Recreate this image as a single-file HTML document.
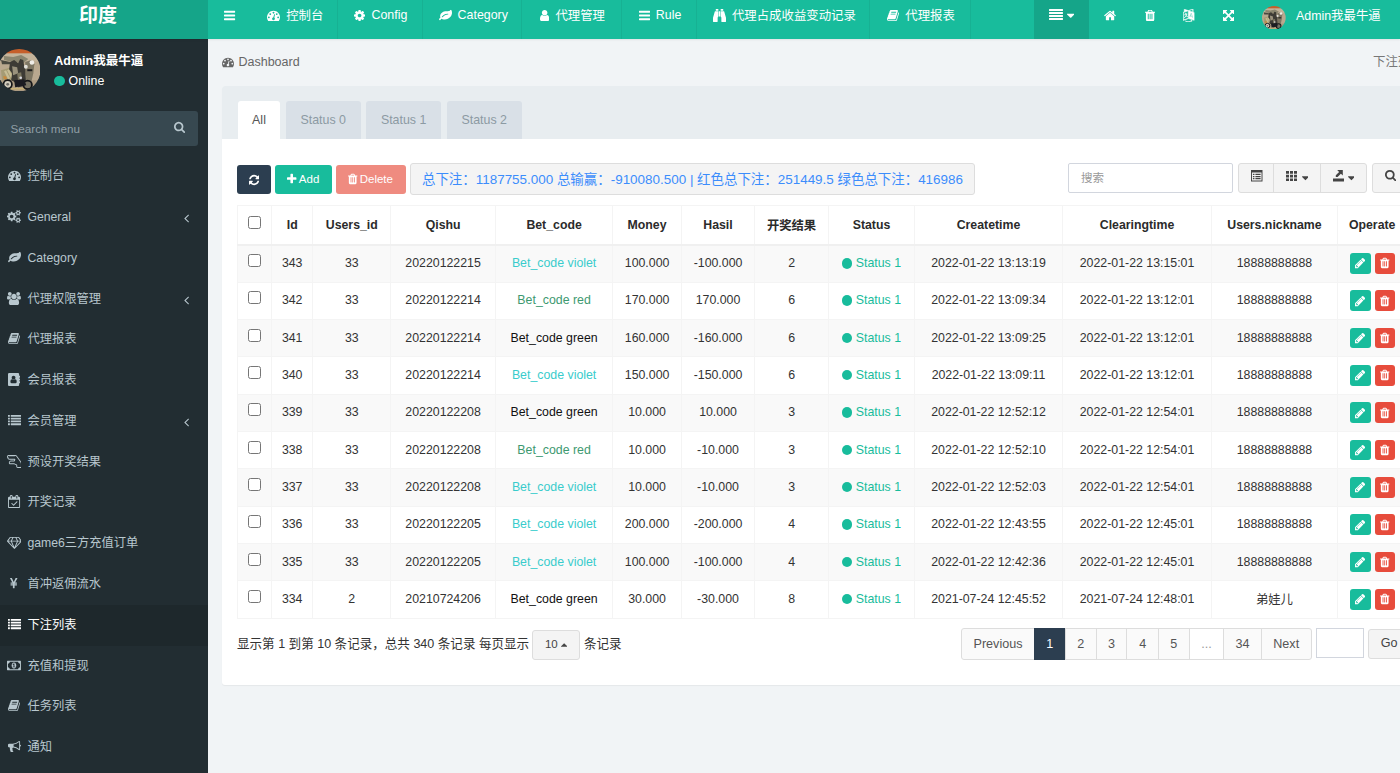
<!DOCTYPE html><html lang="zh"><head><meta charset="utf-8"><title>印度</title><style>*{box-sizing:border-box}
html,body{margin:0;padding:0}
body{width:1400px;height:773px;overflow:hidden;position:relative;background:#f1f4f6;font-family:"Liberation Sans","Noto Sans CJK SC",sans-serif;font-size:12.6px;color:#333}
svg.i{display:inline-block;fill:currentColor;vertical-align:middle;flex:none}
#hdr{position:absolute;left:0;top:0;width:1400px;height:39px;background:#18bc9c;color:#fff;z-index:3;box-shadow:0 1px 2px rgba(0,0,0,.07)}
#logo{position:absolute;left:0;top:0;width:208px;height:39px;background:#15a589;font-size:19px;text-align:center;line-height:31px;padding-right:12px}
.tog{position:absolute;left:208px;top:0;width:44px;height:39px;display:flex;align-items:center;justify-content:center;padding-bottom:9px}
.nv{position:absolute;top:0;height:39px;display:flex;align-items:center;justify-content:center;border-right:1px solid #17b193;font-size:12.4px;padding-bottom:9px;white-space:nowrap}
.nv span{margin-left:6px}
.nv{padding-left:2px}
.nvd{position:absolute;left:1034px;width:55px;top:0;height:39px;background:#15a589;display:flex;align-items:center;justify-content:center;padding-bottom:9px}
.nvi{position:absolute;top:0;width:40px;height:39px;display:flex;align-items:center;justify-content:center;padding-bottom:8px}
.av2{position:absolute;left:1262px;top:5.8px;width:23.7px;height:23.7px}
.unm{position:absolute;left:1296px;top:0;height:33px;line-height:33px;font-size:12.4px;white-space:nowrap}
#sb{position:absolute;left:0;top:39px;width:208px;height:734px;background:#222d32;color:#b8c7ce}
.av1{position:absolute;left:-2px;top:9.7px;width:42.4px;height:42.4px}
.un{position:absolute;left:54.3px;top:10.5px;color:#fff;font-size:12.5px;white-space:nowrap}
.onl{position:absolute;left:54px;top:35px;color:#fff;font-size:12.4px;line-height:14px;white-space:nowrap}
.onl i{display:inline-block;width:10.5px;height:10.5px;border-radius:50%;background:#18bc9c;margin-right:4px;vertical-align:-1px}
.srch{position:absolute;left:-8px;top:72px;width:206px;height:35px;border-radius:3px;background:#374850;color:#8f9ea5;font-size:11.7px;line-height:35.7px;padding-left:18.5px}
.srch svg{position:absolute;left:181.8px;top:10.4px;fill:#b8c7ce}
#sb ul{list-style:none;margin:0;padding:0;position:absolute;left:0;top:117.2px;width:208px}
#sb li{position:relative;height:40.786px;line-height:40.786px;font-size:12.25px;white-space:nowrap}
#sb li.act{background:#1e282c;color:#fff}
.mi{position:absolute;left:4px;width:20px;top:0;text-align:center}
.mi svg{vertical-align:-2px}
.mt{position:absolute;left:27.4px;top:0}
#ct{position:absolute;left:208px;top:39px;width:1192px;height:734px}
.bc{position:absolute;left:14px;top:16px;font-size:12.5px;color:#666;word-spacing:1px;white-space:nowrap}
.bc svg{vertical-align:-2px;fill:#666}
.bcr{position:absolute;left:1165px;top:12.5px;font-size:12.4px;color:#777;white-space:nowrap}
#pn{position:absolute;left:14px;top:47px;width:1200px;height:599px;background:#fff;border-radius:3px;box-shadow:0 1px 1px rgba(0,0,0,.05)}
.ph{position:absolute;left:0;top:0;width:1200px;height:53px;background:#e8edf0;border-radius:3px 3px 0 0}
.tab{position:absolute;top:15.3px;height:37.7px;background:#d9e0e7;color:#8c9aa3;text-align:center;line-height:38.4px;border-radius:3px 3px 0 0;font-size:12.4px}
.tab.on{background:#fff;color:#555}
.btn{position:absolute;border-radius:3px;display:flex;align-items:center;justify-content:center;white-space:nowrap;font-size:11.5px;color:#fff}
.b1{left:15px;top:79px;width:34px;height:29.25px;background:#2c3e50}
.b2{left:53px;top:79px;width:56.75px;height:29.25px;padding-bottom:2px;background:#18bc9c}
.b3{left:113.75px;top:79px;width:69.75px;height:29.25px;padding-bottom:2px;background:#ef8b80}
.b2 span,.b3 span{margin-left:2px}
.b4{left:187.6px;top:77.3px;width:565px;height:31.3px;background:#f4f4f4;border:1px solid #ddd;color:#3c8dfc;font-size:13.45px;justify-content:flex-start;padding-left:11.4px;padding-bottom:1.2px}
.sin{position:absolute;left:846px;top:77px;width:165px;height:30px;border:1px solid #d2d6de;border-radius:2px;color:#999;font-size:11.5px;line-height:28px;padding-left:12px;background:#fff}
.bg{position:absolute;left:1016px;top:77px;height:30px;width:129.2px;border:1px solid #ddd;border-radius:3px;background:#f4f4f4;display:flex;color:#444}
.bg div{display:flex;align-items:center;justify-content:center;height:100%}
.g1{width:35.4px;padding-left:1.4px;border-right:1px solid #ddd}.g2{width:46.8px;padding-left:0;border-right:1px solid #ddd}.g3{flex:1}
.bg svg:first-child{position:relative;top:-2px}
.b5{left:1150.3px;top:77px;width:60px;height:30px;background:#f4f4f4;border:1px solid #ddd;color:#444;justify-content:flex-start;padding-left:11.6px;padding-bottom:5.4px}
#tb{position:absolute;left:14.6px;top:119px;border-collapse:collapse;table-layout:fixed;width:1169.9px;font-size:12.35px}
#tb th,#tb td{border:1px solid #f4f4f4;text-align:center;padding:0;white-space:nowrap;overflow:hidden}
#tb th{height:39.3px;border-bottom:2px solid #f0f0f0;font-weight:bold;color:#2b2b2b;font-size:12.3px}
#tb td{height:37.35px;padding-bottom:1px}
#tb tbody tr:nth-child(odd){background:#f9f9f9}
#tb input{margin:0;width:13px;height:13px;vertical-align:2px}
.c-violet{color:#39cccc}.c-red{color:#3d9970}.c-green{color:#111}
.st{color:#18bc9c}.st i{display:inline-block;width:10.4px;height:10.4px;border-radius:50%;background:#18bc9c;margin-right:3.4px;vertical-align:-1.3px}
td.op{text-align:left !important;padding-left:12px !important;padding-bottom:0.6px !important}
.ob{display:inline-flex;width:20.6px;height:20.6px;border-radius:3px;align-items:center;justify-content:center;color:#fff;vertical-align:middle;margin-right:4px}
.ob.e{background:#18bc9c}.ob.d{background:#e74c3c}
.pinfo{position:absolute;left:15px;top:547px;font-size:12.55px;color:#333;white-space:nowrap}
.pinfo2{position:absolute;left:362px;top:547px;font-size:12.55px;color:#333;white-space:nowrap}
.psz{left:310px;top:544px;width:48px;height:29.5px;padding-bottom:1.5px;background:#f4f4f4;border:1px solid #ddd;color:#444}
.pg{position:absolute;left:739.1px;top:542.2px;height:31px}
.p{position:absolute;top:0;height:32px;border:1px solid #ddd;background:#fafafa;color:#555;text-align:center;line-height:30.4px;font-size:12.6px}
.p:first-child{border-radius:3px 0 0 3px}.p:last-child{border-radius:0 3px 3px 0;width:51px !important}
.p.on{background:#2c3e50;border-color:#2c3e50;color:#fff}
.p.dis{color:#999;background:#fff}
.jin{position:absolute;left:1094px;top:542.4px;width:48px;height:29.6px;border:1px solid #d2d6de;background:#fff}
.go{left:1145.8px;top:543.2px;width:60px;height:30px;background:#f4f4f4;border:1px solid #ddd;color:#444;justify-content:flex-start;padding-left:12px;padding-bottom:1.6px;font-size:12.6px}
</style></head><body><div id="hdr"><div id="logo"><b>印度</b></div><div class="tog"><svg class="i" viewBox="0 -1536 1536 1792" style="width:11.14px;height:13px;"><path transform="scale(1,-1)" d="M1536 192v-128q0 -26 -19 -45t-45 -19h-1408q-26 0 -45 19t-19 45v128q0 26 19 45t45 19h1408q26 0 45 -19t19 -45zM1536 704v-128q0 -26 -19 -45t-45 -19h-1408q-26 0 -45 19t-19 45v128q0 26 19 45t45 19h1408q26 0 45 -19t19 -45zM1536 1216v-128q0 -26 -19 -45 t-45 -19h-1408q-26 0 -45 19t-19 45v128q0 26 19 45t45 19h1408q26 0 45 -19t19 -45z"/></svg></div><div class="nv" style="left:252px;width:85.60000000000002px"><svg class="i" viewBox="0 -1536 1792 1792" style="width:13.00px;height:13px;"><path transform="scale(1,-1)" d="M384 384q0 53 -37.5 90.5t-90.5 37.5t-90.5 -37.5t-37.5 -90.5t37.5 -90.5t90.5 -37.5t90.5 37.5t37.5 90.5zM576 832q0 53 -37.5 90.5t-90.5 37.5t-90.5 -37.5t-37.5 -90.5t37.5 -90.5t90.5 -37.5t90.5 37.5t37.5 90.5zM1004 351l101 382q6 26 -7.5 48.5t-38.5 29.5 t-48 -6.5t-30 -39.5l-101 -382q-60 -5 -107 -43.5t-63 -98.5q-20 -77 20 -146t117 -89t146 20t89 117q16 60 -6 117t-72 91zM1664 384q0 53 -37.5 90.5t-90.5 37.5t-90.5 -37.5t-37.5 -90.5t37.5 -90.5t90.5 -37.5t90.5 37.5t37.5 90.5zM1024 1024q0 53 -37.5 90.5 t-90.5 37.5t-90.5 -37.5t-37.5 -90.5t37.5 -90.5t90.5 -37.5t90.5 37.5t37.5 90.5zM1472 832q0 53 -37.5 90.5t-90.5 37.5t-90.5 -37.5t-37.5 -90.5t37.5 -90.5t90.5 -37.5t90.5 37.5t37.5 90.5zM1792 384q0 -261 -141 -483q-19 -29 -54 -29h-1402q-35 0 -54 29 q-141 221 -141 483q0 182 71 348t191 286t286 191t348 71t348 -71t286 -191t191 -286t71 -348z"/></svg><span>控制台</span></div><div class="nv" style="left:337.6px;width:85.5px"><svg class="i" viewBox="0 -1536 1536 1792" style="width:11.14px;height:13px;"><path transform="scale(1,-1)" d="M1024 640q0 106 -75 181t-181 75t-181 -75t-75 -181t75 -181t181 -75t181 75t75 181zM1536 749v-222q0 -12 -8 -23t-20 -13l-185 -28q-19 -54 -39 -91q35 -50 107 -138q10 -12 10 -25t-9 -23q-27 -37 -99 -108t-94 -71q-12 0 -26 9l-138 108q-44 -23 -91 -38 q-16 -136 -29 -186q-7 -28 -36 -28h-222q-14 0 -24.5 8.5t-11.5 21.5l-28 184q-49 16 -90 37l-141 -107q-10 -9 -25 -9q-14 0 -25 11q-126 114 -165 168q-7 10 -7 23q0 12 8 23q15 21 51 66.5t54 70.5q-27 50 -41 99l-183 27q-13 2 -21 12.5t-8 23.5v222q0 12 8 23t19 13 l186 28q14 46 39 92q-40 57 -107 138q-10 12 -10 24q0 10 9 23q26 36 98.5 107.5t94.5 71.5q13 0 26 -10l138 -107q44 23 91 38q16 136 29 186q7 28 36 28h222q14 0 24.5 -8.5t11.5 -21.5l28 -184q49 -16 90 -37l142 107q9 9 24 9q13 0 25 -10q129 -119 165 -170q7 -8 7 -22 q0 -12 -8 -23q-15 -21 -51 -66.5t-54 -70.5q26 -50 41 -98l183 -28q13 -2 21 -12.5t8 -23.5z"/></svg><span>Config</span></div><div class="nv" style="left:423.1px;width:99.29999999999995px"><svg class="i" viewBox="0 -1536 1792 1792" style="width:13.00px;height:13px;"><path transform="scale(1,-1)" d="M1280 832q0 26 -19 45t-45 19q-172 0 -318 -49.5t-259.5 -134t-235.5 -219.5q-19 -21 -19 -45q0 -26 19 -45t45 -19q24 0 45 19q27 24 74 71t67 66q137 124 268.5 176t313.5 52q26 0 45 19t19 45zM1792 1030q0 -95 -20 -193q-46 -224 -184.5 -383t-357.5 -268 q-214 -108 -438 -108q-148 0 -286 47q-15 5 -88 42t-96 37q-16 0 -39.5 -32t-45 -70t-52.5 -70t-60 -32q-43 0 -63.5 17.5t-45.5 59.5q-2 4 -6 11t-5.5 10t-3 9.5t-1.5 13.5q0 35 31 73.5t68 65.5t68 56t31 48q0 4 -14 38t-16 44q-9 51 -9 104q0 115 43.5 220t119 184.5 t170.5 139t204 95.5q55 18 145 25.5t179.5 9t178.5 6t163.5 24t113.5 56.5l29.5 29.5t29.5 28t27 20t36.5 16t43.5 4.5q39 0 70.5 -46t47.5 -112t24 -124t8 -96z"/></svg><span>Category</span></div><div class="nv" style="left:522.4px;width:99.39999999999998px"><svg class="i" viewBox="0 -1536 1280 1792" style="width:9.29px;height:13px;"><path transform="scale(1,-1)" d="M1280 137q0 -109 -62.5 -187t-150.5 -78h-854q-88 0 -150.5 78t-62.5 187q0 85 8.5 160.5t31.5 152t58.5 131t94 89t134.5 34.5q131 -128 313 -128t313 128q76 0 134.5 -34.5t94 -89t58.5 -131t31.5 -152t8.5 -160.5zM1024 1024q0 -159 -112.5 -271.5t-271.5 -112.5 t-271.5 112.5t-112.5 271.5t112.5 271.5t271.5 112.5t271.5 -112.5t112.5 -271.5z"/></svg><span>代理管理</span></div><div class="nv" style="left:621.8px;width:75.5px"><svg class="i" viewBox="0 -1536 1536 1792" style="width:11.14px;height:13px;"><path transform="scale(1,-1)" d="M1536 192v-128q0 -26 -19 -45t-45 -19h-1408q-26 0 -45 19t-19 45v128q0 26 19 45t45 19h1408q26 0 45 -19t19 -45zM1536 704v-128q0 -26 -19 -45t-45 -19h-1408q-26 0 -45 19t-19 45v128q0 26 19 45t45 19h1408q26 0 45 -19t19 -45zM1536 1216v-128q0 -26 -19 -45 t-45 -19h-1408q-26 0 -45 19t-19 45v128q0 26 19 45t45 19h1408q26 0 45 -19t19 -45z"/></svg><span>Rule</span></div><div class="nv" style="left:697.3px;width:173.20000000000005px"><svg class="i" viewBox="0 -1536 1792 1792" style="width:13.00px;height:13px;"><path transform="scale(1,-1)" d="M704 1216v-768q0 -26 -19 -45t-45 -19v-576q0 -26 -19 -45t-45 -19h-512q-26 0 -45 19t-19 45v512l249 873q7 23 31 23h424zM1024 1216v-704h-256v704h256zM1792 320v-512q0 -26 -19 -45t-45 -19h-512q-26 0 -45 19t-19 45v576q-26 0 -45 19t-19 45v768h424q24 0 31 -23z M736 1504v-224h-352v224q0 14 9 23t23 9h288q14 0 23 -9t9 -23zM1408 1504v-224h-352v224q0 14 9 23t23 9h288q14 0 23 -9t9 -23z"/></svg><span>代理占成收益变动记录</span></div><div class="nv" style="left:870.5px;width:100.0px"><svg class="i" viewBox="0 -1536 1664 1792" style="width:12.07px;height:13px;"><path transform="scale(1,-1)" d="M1639 1058q40 -57 18 -129l-275 -906q-19 -64 -76.5 -107.5t-122.5 -43.5h-923q-77 0 -148.5 53.5t-99.5 131.5q-24 67 -2 127q0 4 3 27t4 37q1 8 -3 21.5t-3 19.5q2 11 8 21t16.5 23.5t16.5 23.5q23 38 45 91.5t30 91.5q3 10 0.5 30t-0.5 28q3 11 17 28t17 23 q21 36 42 92t25 90q1 9 -2.5 32t0.5 28q4 13 22 30.5t22 22.5q19 26 42.5 84.5t27.5 96.5q1 8 -3 25.5t-2 26.5q2 8 9 18t18 23t17 21q8 12 16.5 30.5t15 35t16 36t19.5 32t26.5 23.5t36 11.5t47.5 -5.5l-1 -3q38 9 51 9h761q74 0 114 -56t18 -130l-274 -906 q-36 -119 -71.5 -153.5t-128.5 -34.5h-869q-27 0 -38 -15q-11 -16 -1 -43q24 -70 144 -70h923q29 0 56 15.5t35 41.5l300 987q7 22 5 57q38 -15 59 -43zM575 1056q-4 -13 2 -22.5t20 -9.5h608q13 0 25.5 9.5t16.5 22.5l21 64q4 13 -2 22.5t-20 9.5h-608q-13 0 -25.5 -9.5 t-16.5 -22.5zM492 800q-4 -13 2 -22.5t20 -9.5h608q13 0 25.5 9.5t16.5 22.5l21 64q4 13 -2 22.5t-20 9.5h-608q-13 0 -25.5 -9.5t-16.5 -22.5z"/></svg><span>代理报表</span></div><div class="nvd"><svg class="i" viewBox="0 -1536 1792 1792" style="width:14.00px;height:14px;"><path transform="scale(1,-1)" d="M1792 192v-128q0 -26 -19 -45t-45 -19h-1664q-26 0 -45 19t-19 45v128q0 26 19 45t45 19h1664q26 0 45 -19t19 -45zM1792 576v-128q0 -26 -19 -45t-45 -19h-1664q-26 0 -45 19t-19 45v128q0 26 19 45t45 19h1664q26 0 45 -19t19 -45zM1792 960v-128q0 -26 -19 -45 t-45 -19h-1664q-26 0 -45 19t-19 45v128q0 26 19 45t45 19h1664q26 0 45 -19t19 -45zM1792 1344v-128q0 -26 -19 -45t-45 -19h-1664q-26 0 -45 19t-19 45v128q0 26 19 45t45 19h1664q26 0 45 -19t19 -45z"/></svg><svg class="i" viewBox="0 -1536 1024 1792" style="width:7.43px;height:13px;margin-left:4px"><path transform="scale(1,-1)" d="M1024 832q0 -26 -19 -45l-448 -448q-19 -19 -45 -19t-45 19l-448 448q-19 19 -19 45t19 45t45 19h896q26 0 45 -19t19 -45z"/></svg></div><div class="nvi" style="left:1090px"><svg class="i" viewBox="0 -1536 1664 1792" style="width:12.07px;height:13px;"><path transform="scale(1,-1)" d="M1408 544v-480q0 -26 -19 -45t-45 -19h-384v384h-256v-384h-384q-26 0 -45 19t-19 45v480q0 1 0.5 3t0.5 3l575 474l575 -474q1 -2 1 -6zM1631 613l-62 -74q-8 -9 -21 -11h-3q-13 0 -21 7l-692 577l-692 -577q-12 -8 -24 -7q-13 2 -21 11l-62 74q-8 10 -7 23.5t11 21.5 l719 599q32 26 76 26t76 -26l244 -204v195q0 14 9 23t23 9h192q14 0 23 -9t9 -23v-408l219 -182q10 -8 11 -21.5t-7 -23.5z"/></svg></div><div class="nvi" style="left:1130px"><svg class="i" viewBox="0 -1536 1408 1792" style="width:10.21px;height:13px;"><path transform="scale(1,-1)" d="M512 160v704q0 14 -9 23t-23 9h-64q-14 0 -23 -9t-9 -23v-704q0 -14 9 -23t23 -9h64q14 0 23 9t9 23zM768 160v704q0 14 -9 23t-23 9h-64q-14 0 -23 -9t-9 -23v-704q0 -14 9 -23t23 -9h64q14 0 23 9t9 23zM1024 160v704q0 14 -9 23t-23 9h-64q-14 0 -23 -9t-9 -23v-704 q0 -14 9 -23t23 -9h64q14 0 23 9t9 23zM480 1152h448l-48 117q-7 9 -17 11h-317q-10 -2 -17 -11zM1408 1120v-64q0 -14 -9 -23t-23 -9h-96v-948q0 -83 -47 -143.5t-113 -60.5h-832q-66 0 -113 58.5t-47 141.5v952h-96q-14 0 -23 9t-9 23v64q0 14 9 23t23 9h309l70 167 q15 37 54 63t79 26h320q40 0 79 -26t54 -63l70 -167h309q14 0 23 -9t9 -23z"/></svg></div><div class="nvi" style="left:1169px"><svg class="i" viewBox="0 -1536 1536 1792" style="width:11.14px;height:13px;stroke:#fff;stroke-width:70;"><path transform="scale(1,-1)" d="M654 458q-1 -3 -12.5 0.5t-31.5 11.5l-20 9q-44 20 -87 49q-7 5 -41 31.5t-38 28.5q-67 -103 -134 -181q-81 -95 -105 -110q-4 -2 -19.5 -4t-18.5 0q6 4 82 92q21 24 85.5 115t78.5 118q17 30 51 98.5t36 77.5q-8 1 -110 -33q-8 -2 -27.5 -7.5t-34.5 -9.5t-17 -5 q-2 -2 -2 -10.5t-1 -9.5q-5 -10 -31 -15q-23 -7 -47 0q-18 4 -28 21q-4 6 -5 23q6 2 24.5 5t29.5 6q58 16 105 32q100 35 102 35q10 2 43 19.5t44 21.5q9 3 21.5 8t14.5 5.5t6 -0.5q2 -12 -1 -33q0 -2 -12.5 -27t-26.5 -53.5t-17 -33.5q-25 -50 -77 -131l64 -28 q12 -6 74.5 -32t67.5 -28q4 -1 10.5 -25.5t4.5 -30.5zM449 944q3 -15 -4 -28q-12 -23 -50 -38q-30 -12 -60 -12q-26 3 -49 26q-14 15 -18 41l1 3q3 -3 19.5 -5t26.5 0t58 16q36 12 55 14q17 0 21 -17zM1147 815l63 -227l-139 42zM39 15l694 232v1032l-694 -233v-1031z M1280 332l102 -31l-181 657l-100 31l-216 -536l102 -31l45 110l211 -65zM777 1294l573 -184v380zM1088 -29l158 -13l-54 -160l-40 66q-130 -83 -276 -108q-58 -12 -91 -12h-84q-79 0 -199.5 39t-183.5 85q-8 7 -8 16q0 8 5 13.5t13 5.5q4 0 18 -7.5t30.5 -16.5t20.5 -11 q73 -37 159.5 -61.5t157.5 -24.5q95 0 167 14.5t157 50.5q15 7 30.5 15.5t34 19t28.5 16.5zM1536 1050v-1079l-774 246q-14 -6 -375 -127.5t-368 -121.5q-13 0 -18 13q0 1 -1 3v1078q3 9 4 10q5 6 20 11q107 36 149 50v384l558 -198q2 0 160.5 55t316 108.5t161.5 53.5 q20 0 20 -21v-418z"/></svg></div><div class="nvi" style="left:1208.3px"><svg class="i" viewBox="0 -1536 1536 1792" style="width:11.14px;height:13px;"><path transform="scale(1,-1)" d="M1283 995l-355 -355l355 -355l144 144q29 31 70 14q39 -17 39 -59v-448q0 -26 -19 -45t-45 -19h-448q-42 0 -59 40q-17 39 14 69l144 144l-355 355l-355 -355l144 -144q31 -30 14 -69q-17 -40 -59 -40h-448q-26 0 -45 19t-19 45v448q0 42 40 59q39 17 69 -14l144 -144 l355 355l-355 355l-144 -144q-19 -19 -45 -19q-12 0 -24 5q-40 17 -40 59v448q0 26 19 45t45 19h448q42 0 59 -40q17 -39 -14 -69l-144 -144l355 -355l355 355l-144 144q-31 30 -14 69q17 40 59 40h448q26 0 45 -19t19 -45v-448q0 -42 -39 -59q-13 -5 -25 -5q-26 0 -45 19z "/></svg></div><div class="av2"><svg viewBox="0 0 42 42" style="width:100%;height:100%;display:block"><defs><clipPath id="c2"><circle cx="21" cy="21" r="21"/></clipPath><filter id="fc2" x="-10%" y="-10%" width="120%" height="120%"><feGaussianBlur stdDeviation="0.55"/></filter></defs><g clip-path="url(#c2)"><g filter="url(#fc2)"><rect x="-2" y="-2" width="46" height="46" fill="#b9a88f"/><rect x="-2" y="-2" width="46" height="6.6" fill="#c65f2a"/><rect x="-2" y="4.4" width="46" height="8" fill="#c4b49b"/><rect x="-2" y="31" width="46" height="13" fill="#ad9b82"/><rect x="-2" y="38.5" width="46" height="1.6" fill="#c8b277"/><path d="M6 7l9 1 8-2 7 4-5 4-11-1-8-2z" fill="#8b866f"/><path d="M3 11l9 2 1 2-9 0z" fill="#4a4840"/><path d="M3 21l10-3 4 8-5 6-8-1z" fill="#a59b74"/><path d="M6 22l2-1 4 8-2 1zM9 21l2-1 4 8-2 1z" fill="#c7bd95"/><path d="M12 13l4-2 4 3 2-4 3 1 1 6 3 2-1 6 1 7-4 5-5 1-3-5-4-2 1-7-3-4z" fill="#3d3b35"/><path d="M14 17l5 1 1 6-5 2z" fill="#9a927d"/><path d="M19 24l4-1 1 9-4 1z" fill="#7a745f"/><path d="M27 13l6-2 3 4-1 9-2 9-5 2-1-10z" fill="#7d7663"/><path d="M29 20l5 0 0 2-5 0z" fill="#1f1f1e"/><circle cx="33.6" cy="13.4" r="2.3" fill="#efede8"/><circle cx="27.6" cy="17.6" r="1.9" fill="#e3e1da"/><circle cx="22.5" cy="28.5" r="1.3" fill="#d9d9e2"/><circle cx="9.6" cy="35" r="4.2" fill="#d3cdbd" stroke="#141519" stroke-width="1.7"/><circle cx="9.6" cy="35" r="1.4" fill="#6c6a66"/><circle cx="29.4" cy="35.6" r="4.2" fill="#777264" stroke="#141519" stroke-width="1.8"/><path d="M16 31l10-1 2 6-11 2z" fill="#1a1b20"/><path d="M5 27l3 0 1 3-3 0z" fill="#c98a3c"/></g></g></svg></div><div class="unm">Admin我最牛逼</div></div><div id="sb"><div class="av1"><svg viewBox="0 0 42 42" style="width:100%;height:100%;display:block"><defs><clipPath id="c1"><circle cx="21" cy="21" r="21"/></clipPath><filter id="fc1" x="-10%" y="-10%" width="120%" height="120%"><feGaussianBlur stdDeviation="0.55"/></filter></defs><g clip-path="url(#c1)"><g filter="url(#fc1)"><rect x="-2" y="-2" width="46" height="46" fill="#b9a88f"/><rect x="-2" y="-2" width="46" height="6.6" fill="#c65f2a"/><rect x="-2" y="4.4" width="46" height="8" fill="#c4b49b"/><rect x="-2" y="31" width="46" height="13" fill="#ad9b82"/><rect x="-2" y="38.5" width="46" height="1.6" fill="#c8b277"/><path d="M6 7l9 1 8-2 7 4-5 4-11-1-8-2z" fill="#8b866f"/><path d="M3 11l9 2 1 2-9 0z" fill="#4a4840"/><path d="M3 21l10-3 4 8-5 6-8-1z" fill="#a59b74"/><path d="M6 22l2-1 4 8-2 1zM9 21l2-1 4 8-2 1z" fill="#c7bd95"/><path d="M12 13l4-2 4 3 2-4 3 1 1 6 3 2-1 6 1 7-4 5-5 1-3-5-4-2 1-7-3-4z" fill="#3d3b35"/><path d="M14 17l5 1 1 6-5 2z" fill="#9a927d"/><path d="M19 24l4-1 1 9-4 1z" fill="#7a745f"/><path d="M27 13l6-2 3 4-1 9-2 9-5 2-1-10z" fill="#7d7663"/><path d="M29 20l5 0 0 2-5 0z" fill="#1f1f1e"/><circle cx="33.6" cy="13.4" r="2.3" fill="#efede8"/><circle cx="27.6" cy="17.6" r="1.9" fill="#e3e1da"/><circle cx="22.5" cy="28.5" r="1.3" fill="#d9d9e2"/><circle cx="9.6" cy="35" r="4.2" fill="#d3cdbd" stroke="#141519" stroke-width="1.7"/><circle cx="9.6" cy="35" r="1.4" fill="#6c6a66"/><circle cx="29.4" cy="35.6" r="4.2" fill="#777264" stroke="#141519" stroke-width="1.8"/><path d="M16 31l10-1 2 6-11 2z" fill="#1a1b20"/><path d="M5 27l3 0 1 3-3 0z" fill="#c98a3c"/></g></g></svg></div><div class="un"><b>Admin我最牛逼</b></div><div class="onl"><i></i>Online</div><div class="srch"><span>Search menu</span><svg class="i" viewBox="0 -1536 1664 1792" style="width:11.14px;height:12px;"><path transform="scale(1,-1)" d="M1152 704q0 185 -131.5 316.5t-316.5 131.5t-316.5 -131.5t-131.5 -316.5t131.5 -316.5t316.5 -131.5t316.5 131.5t131.5 316.5zM1664 -128q0 -52 -38 -90t-90 -38q-54 0 -90 38l-343 342q-179 -124 -399 -124q-143 0 -273.5 55.5t-225 150t-150 225t-55.5 273.5 t55.5 273.5t150 225t225 150t273.5 55.5t273.5 -55.5t225 -150t150 -225t55.5 -273.5q0 -220 -124 -399l343 -343q37 -37 37 -90z"/></svg></div><ul><li><span class="mi"><svg class="i" viewBox="0 -1536 1792 1792" style="width:13.00px;height:13px;"><path transform="scale(1,-1)" d="M384 384q0 53 -37.5 90.5t-90.5 37.5t-90.5 -37.5t-37.5 -90.5t37.5 -90.5t90.5 -37.5t90.5 37.5t37.5 90.5zM576 832q0 53 -37.5 90.5t-90.5 37.5t-90.5 -37.5t-37.5 -90.5t37.5 -90.5t90.5 -37.5t90.5 37.5t37.5 90.5zM1004 351l101 382q6 26 -7.5 48.5t-38.5 29.5 t-48 -6.5t-30 -39.5l-101 -382q-60 -5 -107 -43.5t-63 -98.5q-20 -77 20 -146t117 -89t146 20t89 117q16 60 -6 117t-72 91zM1664 384q0 53 -37.5 90.5t-90.5 37.5t-90.5 -37.5t-37.5 -90.5t37.5 -90.5t90.5 -37.5t90.5 37.5t37.5 90.5zM1024 1024q0 53 -37.5 90.5 t-90.5 37.5t-90.5 -37.5t-37.5 -90.5t37.5 -90.5t90.5 -37.5t90.5 37.5t37.5 90.5zM1472 832q0 53 -37.5 90.5t-90.5 37.5t-90.5 -37.5t-37.5 -90.5t37.5 -90.5t90.5 -37.5t90.5 37.5t37.5 90.5zM1792 384q0 -261 -141 -483q-19 -29 -54 -29h-1402q-35 0 -54 29 q-141 221 -141 483q0 182 71 348t191 286t286 191t348 71t348 -71t286 -191t191 -286t71 -348z"/></svg></span><span class="mt">控制台</span></li><li><span class="mi"><svg class="i" viewBox="0 -1536 1920 1792" style="width:13.93px;height:13px;"><path transform="scale(1,-1)" d="M896 640q0 106 -75 181t-181 75t-181 -75t-75 -181t75 -181t181 -75t181 75t75 181zM1664 128q0 52 -38 90t-90 38t-90 -38t-38 -90q0 -53 37.5 -90.5t90.5 -37.5t90.5 37.5t37.5 90.5zM1664 1152q0 52 -38 90t-90 38t-90 -38t-38 -90q0 -53 37.5 -90.5t90.5 -37.5 t90.5 37.5t37.5 90.5zM1280 731v-185q0 -10 -7 -19.5t-16 -10.5l-155 -24q-11 -35 -32 -76q34 -48 90 -115q7 -11 7 -20q0 -12 -7 -19q-23 -30 -82.5 -89.5t-78.5 -59.5q-11 0 -21 7l-115 90q-37 -19 -77 -31q-11 -108 -23 -155q-7 -24 -30 -24h-186q-11 0 -20 7.5t-10 17.5 l-23 153q-34 10 -75 31l-118 -89q-7 -7 -20 -7q-11 0 -21 8q-144 133 -144 160q0 9 7 19q10 14 41 53t47 61q-23 44 -35 82l-152 24q-10 1 -17 9.5t-7 19.5v185q0 10 7 19.5t16 10.5l155 24q11 35 32 76q-34 48 -90 115q-7 11 -7 20q0 12 7 20q22 30 82 89t79 59q11 0 21 -7 l115 -90q34 18 77 32q11 108 23 154q7 24 30 24h186q11 0 20 -7.5t10 -17.5l23 -153q34 -10 75 -31l118 89q8 7 20 7q11 0 21 -8q144 -133 144 -160q0 -8 -7 -19q-12 -16 -42 -54t-45 -60q23 -48 34 -82l152 -23q10 -2 17 -10.5t7 -19.5zM1920 198v-140q0 -16 -149 -31 q-12 -27 -30 -52q51 -113 51 -138q0 -4 -4 -7q-122 -71 -124 -71q-8 0 -46 47t-52 68q-20 -2 -30 -2t-30 2q-14 -21 -52 -68t-46 -47q-2 0 -124 71q-4 3 -4 7q0 25 51 138q-18 25 -30 52q-149 15 -149 31v140q0 16 149 31q13 29 30 52q-51 113 -51 138q0 4 4 7q4 2 35 20 t59 34t30 16q8 0 46 -46.5t52 -67.5q20 2 30 2t30 -2q51 71 92 112l6 2q4 0 124 -70q4 -3 4 -7q0 -25 -51 -138q17 -23 30 -52q149 -15 149 -31zM1920 1222v-140q0 -16 -149 -31q-12 -27 -30 -52q51 -113 51 -138q0 -4 -4 -7q-122 -71 -124 -71q-8 0 -46 47t-52 68 q-20 -2 -30 -2t-30 2q-14 -21 -52 -68t-46 -47q-2 0 -124 71q-4 3 -4 7q0 25 51 138q-18 25 -30 52q-149 15 -149 31v140q0 16 149 31q13 29 30 52q-51 113 -51 138q0 4 4 7q4 2 35 20t59 34t30 16q8 0 46 -46.5t52 -67.5q20 2 30 2t30 -2q51 71 92 112l6 2q4 0 124 -70 q4 -3 4 -7q0 -25 -51 -138q17 -23 30 -52q149 -15 149 -31z"/></svg></span><span class="mt">General</span><svg class="i" viewBox="0 -1536 640 1792" style="width:5.00px;height:14px;position:absolute;left:183.5px;top:14px"><path transform="scale(1,-1)" d="M627 992q0 -13 -10 -23l-393 -393l393 -393q10 -10 10 -23t-10 -23l-50 -50q-10 -10 -23 -10t-23 10l-466 466q-10 10 -10 23t10 23l466 466q10 10 23 10t23 -10l50 -50q10 -10 10 -23z"/></svg></li><li><span class="mi"><svg class="i" viewBox="0 -1536 1792 1792" style="width:13.00px;height:13px;"><path transform="scale(1,-1)" d="M1280 832q0 26 -19 45t-45 19q-172 0 -318 -49.5t-259.5 -134t-235.5 -219.5q-19 -21 -19 -45q0 -26 19 -45t45 -19q24 0 45 19q27 24 74 71t67 66q137 124 268.5 176t313.5 52q26 0 45 19t19 45zM1792 1030q0 -95 -20 -193q-46 -224 -184.5 -383t-357.5 -268 q-214 -108 -438 -108q-148 0 -286 47q-15 5 -88 42t-96 37q-16 0 -39.5 -32t-45 -70t-52.5 -70t-60 -32q-43 0 -63.5 17.5t-45.5 59.5q-2 4 -6 11t-5.5 10t-3 9.5t-1.5 13.5q0 35 31 73.5t68 65.5t68 56t31 48q0 4 -14 38t-16 44q-9 51 -9 104q0 115 43.5 220t119 184.5 t170.5 139t204 95.5q55 18 145 25.5t179.5 9t178.5 6t163.5 24t113.5 56.5l29.5 29.5t29.5 28t27 20t36.5 16t43.5 4.5q39 0 70.5 -46t47.5 -112t24 -124t8 -96z"/></svg></span><span class="mt">Category</span></li><li><span class="mi"><svg class="i" viewBox="0 -1536 1920 1792" style="width:13.93px;height:13px;"><path transform="scale(1,-1)" d="M593 640q-162 -5 -265 -128h-134q-82 0 -138 40.5t-56 118.5q0 353 124 353q6 0 43.5 -21t97.5 -42.5t119 -21.5q67 0 133 23q-5 -37 -5 -66q0 -139 81 -256zM1664 3q0 -120 -73 -189.5t-194 -69.5h-874q-121 0 -194 69.5t-73 189.5q0 53 3.5 103.5t14 109t26.5 108.5 t43 97.5t62 81t85.5 53.5t111.5 20q10 0 43 -21.5t73 -48t107 -48t135 -21.5t135 21.5t107 48t73 48t43 21.5q61 0 111.5 -20t85.5 -53.5t62 -81t43 -97.5t26.5 -108.5t14 -109t3.5 -103.5zM640 1280q0 -106 -75 -181t-181 -75t-181 75t-75 181t75 181t181 75t181 -75 t75 -181zM1344 896q0 -159 -112.5 -271.5t-271.5 -112.5t-271.5 112.5t-112.5 271.5t112.5 271.5t271.5 112.5t271.5 -112.5t112.5 -271.5zM1920 671q0 -78 -56 -118.5t-138 -40.5h-134q-103 123 -265 128q81 117 81 256q0 29 -5 66q66 -23 133 -23q59 0 119 21.5t97.5 42.5 t43.5 21q124 0 124 -353zM1792 1280q0 -106 -75 -181t-181 -75t-181 75t-75 181t75 181t181 75t181 -75t75 -181z"/></svg></span><span class="mt">代理权限管理</span><svg class="i" viewBox="0 -1536 640 1792" style="width:5.00px;height:14px;position:absolute;left:183.5px;top:14px"><path transform="scale(1,-1)" d="M627 992q0 -13 -10 -23l-393 -393l393 -393q10 -10 10 -23t-10 -23l-50 -50q-10 -10 -23 -10t-23 10l-466 466q-10 10 -10 23t10 23l466 466q10 10 23 10t23 -10l50 -50q10 -10 10 -23z"/></svg></li><li><span class="mi"><svg class="i" viewBox="0 -1536 1664 1792" style="width:12.07px;height:13px;"><path transform="scale(1,-1)" d="M1639 1058q40 -57 18 -129l-275 -906q-19 -64 -76.5 -107.5t-122.5 -43.5h-923q-77 0 -148.5 53.5t-99.5 131.5q-24 67 -2 127q0 4 3 27t4 37q1 8 -3 21.5t-3 19.5q2 11 8 21t16.5 23.5t16.5 23.5q23 38 45 91.5t30 91.5q3 10 0.5 30t-0.5 28q3 11 17 28t17 23 q21 36 42 92t25 90q1 9 -2.5 32t0.5 28q4 13 22 30.5t22 22.5q19 26 42.5 84.5t27.5 96.5q1 8 -3 25.5t-2 26.5q2 8 9 18t18 23t17 21q8 12 16.5 30.5t15 35t16 36t19.5 32t26.5 23.5t36 11.5t47.5 -5.5l-1 -3q38 9 51 9h761q74 0 114 -56t18 -130l-274 -906 q-36 -119 -71.5 -153.5t-128.5 -34.5h-869q-27 0 -38 -15q-11 -16 -1 -43q24 -70 144 -70h923q29 0 56 15.5t35 41.5l300 987q7 22 5 57q38 -15 59 -43zM575 1056q-4 -13 2 -22.5t20 -9.5h608q13 0 25.5 9.5t16.5 22.5l21 64q4 13 -2 22.5t-20 9.5h-608q-13 0 -25.5 -9.5 t-16.5 -22.5zM492 800q-4 -13 2 -22.5t20 -9.5h608q13 0 25.5 9.5t16.5 22.5l21 64q4 13 -2 22.5t-20 9.5h-608q-13 0 -25.5 -9.5t-16.5 -22.5z"/></svg></span><span class="mt">代理报表</span></li><li><span class="mi"><svg class="i" viewBox="0 -1536 1664 1792" style="width:12.07px;height:13px;"><path transform="scale(1,-1)" d="M1201 298q0 57 -5.5 107t-21 100.5t-39.5 86t-64 58t-91 22.5q-6 -4 -33.5 -20.5t-42.5 -24.5t-40.5 -20t-49 -17t-46.5 -5t-46.5 5t-49 17t-40.5 20t-42.5 24.5t-33.5 20.5q-51 0 -91 -22.5t-64 -58t-39.5 -86t-21 -100.5t-5.5 -107q0 -73 42 -121.5t103 -48.5h576 q61 0 103 48.5t42 121.5zM1028 892q0 108 -76.5 184t-183.5 76t-183.5 -76t-76.5 -184q0 -107 76.5 -183t183.5 -76t183.5 76t76.5 183zM1664 352v-192q0 -14 -9 -23t-23 -9h-96v-224q0 -66 -47 -113t-113 -47h-1216q-66 0 -113 47t-47 113v1472q0 66 47 113t113 47h1216 q66 0 113 -47t47 -113v-224h96q14 0 23 -9t9 -23v-192q0 -14 -9 -23t-23 -9h-96v-128h96q14 0 23 -9t9 -23v-192q0 -14 -9 -23t-23 -9h-96v-128h96q14 0 23 -9t9 -23z"/></svg></span><span class="mt">会员报表</span></li><li><span class="mi"><svg class="i" viewBox="0 -1536 1792 1792" style="width:13.00px;height:13px;"><path transform="scale(1,-1)" d="M256 224v-192q0 -13 -9.5 -22.5t-22.5 -9.5h-192q-13 0 -22.5 9.5t-9.5 22.5v192q0 13 9.5 22.5t22.5 9.5h192q13 0 22.5 -9.5t9.5 -22.5zM256 608v-192q0 -13 -9.5 -22.5t-22.5 -9.5h-192q-13 0 -22.5 9.5t-9.5 22.5v192q0 13 9.5 22.5t22.5 9.5h192q13 0 22.5 -9.5 t9.5 -22.5zM256 992v-192q0 -13 -9.5 -22.5t-22.5 -9.5h-192q-13 0 -22.5 9.5t-9.5 22.5v192q0 13 9.5 22.5t22.5 9.5h192q13 0 22.5 -9.5t9.5 -22.5zM1792 224v-192q0 -13 -9.5 -22.5t-22.5 -9.5h-1344q-13 0 -22.5 9.5t-9.5 22.5v192q0 13 9.5 22.5t22.5 9.5h1344 q13 0 22.5 -9.5t9.5 -22.5zM256 1376v-192q0 -13 -9.5 -22.5t-22.5 -9.5h-192q-13 0 -22.5 9.5t-9.5 22.5v192q0 13 9.5 22.5t22.5 9.5h192q13 0 22.5 -9.5t9.5 -22.5zM1792 608v-192q0 -13 -9.5 -22.5t-22.5 -9.5h-1344q-13 0 -22.5 9.5t-9.5 22.5v192q0 13 9.5 22.5 t22.5 9.5h1344q13 0 22.5 -9.5t9.5 -22.5zM1792 992v-192q0 -13 -9.5 -22.5t-22.5 -9.5h-1344q-13 0 -22.5 9.5t-9.5 22.5v192q0 13 9.5 22.5t22.5 9.5h1344q13 0 22.5 -9.5t9.5 -22.5zM1792 1376v-192q0 -13 -9.5 -22.5t-22.5 -9.5h-1344q-13 0 -22.5 9.5t-9.5 22.5v192 q0 13 9.5 22.5t22.5 9.5h1344q13 0 22.5 -9.5t9.5 -22.5z"/></svg></span><span class="mt">会员管理</span><svg class="i" viewBox="0 -1536 640 1792" style="width:5.00px;height:14px;position:absolute;left:183.5px;top:14px"><path transform="scale(1,-1)" d="M627 992q0 -13 -10 -23l-393 -393l393 -393q10 -10 10 -23t-10 -23l-50 -50q-10 -10 -23 -10t-23 10l-466 466q-10 10 -10 23t10 23l466 466q10 10 23 10t23 -10l50 -50q10 -10 10 -23z"/></svg></li><li><span class="mi"><svg class="i" viewBox="0 -1536 2048 1792" style="width:14.86px;height:13px;"><path transform="scale(1,-1)" d="M1151 1536q61 0 116 -28t91 -77l572 -781q118 -159 118 -359v-355q0 -80 -56 -136t-136 -56h-384q-80 0 -136 56t-56 136v177l-286 143h-546q-80 0 -136 56t-56 136v32q0 119 84.5 203.5t203.5 84.5h420l42 128h-686q-100 0 -173.5 67.5t-81.5 166.5q-65 79 -65 182v32 q0 80 56 136t136 56h959zM1920 -64v355q0 157 -93 284l-573 781q-39 52 -103 52h-959q-26 0 -45 -19t-19 -45q0 -32 1.5 -49.5t9.5 -40.5t25 -43q10 31 35.5 50t56.5 19h832v-32h-832q-26 0 -45 -19t-19 -45q0 -44 3 -58q8 -44 44 -73t81 -29h640h91q40 0 68 -28t28 -68 q0 -15 -5 -30l-64 -192q-10 -29 -35 -47.5t-56 -18.5h-443q-66 0 -113 -47t-47 -113v-32q0 -26 19 -45t45 -19h561q16 0 29 -7l317 -158q24 -13 38.5 -36t14.5 -50v-197q0 -26 19 -45t45 -19h384q26 0 45 19t19 45z"/></svg></span><span class="mt">预设开奖结果</span></li><li><span class="mi"><svg class="i" viewBox="0 -1536 1792 1792" style="width:13.00px;height:13px;"><path transform="scale(1,-1)" d="M1303 572l-512 -512q-10 -9 -23 -9t-23 9l-288 288q-9 10 -9 23t9 22l46 46q9 9 22 9t23 -9l220 -220l444 444q10 9 23 9t22 -9l46 -46q9 -9 9 -22t-9 -23zM128 -128h1408v1024h-1408v-1024zM512 1088v288q0 14 -9 23t-23 9h-64q-14 0 -23 -9t-9 -23v-288q0 -14 9 -23 t23 -9h64q14 0 23 9t9 23zM1280 1088v288q0 14 -9 23t-23 9h-64q-14 0 -23 -9t-9 -23v-288q0 -14 9 -23t23 -9h64q14 0 23 9t9 23zM1664 1152v-1280q0 -52 -38 -90t-90 -38h-1408q-52 0 -90 38t-38 90v1280q0 52 38 90t90 38h128v96q0 66 47 113t113 47h64q66 0 113 -47 t47 -113v-96h384v96q0 66 47 113t113 47h64q66 0 113 -47t47 -113v-96h128q52 0 90 -38t38 -90z"/></svg></span><span class="mt">开奖记录</span></li><li><span class="mi"><svg class="i" viewBox="0 -1536 2048 1792" style="width:14.86px;height:13px;"><path transform="scale(1,-1)" d="M212 768l623 -665l-300 665h-323zM1024 -4l349 772h-698zM538 896l204 384h-262l-288 -384h346zM1213 103l623 665h-323zM683 896h682l-204 384h-274zM1510 896h346l-288 384h-262zM1651 1382l384 -512q14 -18 13 -41.5t-17 -40.5l-960 -1024q-18 -20 -47 -20t-47 20 l-960 1024q-16 17 -17 40.5t13 41.5l384 512q18 26 51 26h1152q33 0 51 -26z"/></svg></span><span class="mt">game6三方充值订单</span></li><li><span class="mi"><svg class="i" viewBox="0 -1536 1027 1792" style="width:7.45px;height:13px;"><path transform="scale(1,-1)" d="M603 0h-172q-13 0 -22.5 9t-9.5 23v330h-288q-13 0 -22.5 9t-9.5 23v103q0 13 9.5 22.5t22.5 9.5h288v85h-288q-13 0 -22.5 9t-9.5 23v104q0 13 9.5 22.5t22.5 9.5h214l-321 578q-8 16 0 32q10 16 28 16h194q19 0 29 -18l215 -425q19 -38 56 -125q10 24 30.5 68t27.5 61 l191 420q8 19 29 19h191q17 0 27 -16q9 -14 1 -31l-313 -579h215q13 0 22.5 -9.5t9.5 -22.5v-104q0 -14 -9.5 -23t-22.5 -9h-290v-85h290q13 0 22.5 -9.5t9.5 -22.5v-103q0 -14 -9.5 -23t-22.5 -9h-290v-330q0 -13 -9.5 -22.5t-22.5 -9.5z"/></svg></span><span class="mt">首冲返佣流水</span></li><li class="act"><span class="mi"><svg class="i" viewBox="0 -1536 1792 1792" style="width:13.00px;height:13px;"><path transform="scale(1,-1)" d="M256 224v-192q0 -13 -9.5 -22.5t-22.5 -9.5h-192q-13 0 -22.5 9.5t-9.5 22.5v192q0 13 9.5 22.5t22.5 9.5h192q13 0 22.5 -9.5t9.5 -22.5zM256 608v-192q0 -13 -9.5 -22.5t-22.5 -9.5h-192q-13 0 -22.5 9.5t-9.5 22.5v192q0 13 9.5 22.5t22.5 9.5h192q13 0 22.5 -9.5 t9.5 -22.5zM256 992v-192q0 -13 -9.5 -22.5t-22.5 -9.5h-192q-13 0 -22.5 9.5t-9.5 22.5v192q0 13 9.5 22.5t22.5 9.5h192q13 0 22.5 -9.5t9.5 -22.5zM1792 224v-192q0 -13 -9.5 -22.5t-22.5 -9.5h-1344q-13 0 -22.5 9.5t-9.5 22.5v192q0 13 9.5 22.5t22.5 9.5h1344 q13 0 22.5 -9.5t9.5 -22.5zM256 1376v-192q0 -13 -9.5 -22.5t-22.5 -9.5h-192q-13 0 -22.5 9.5t-9.5 22.5v192q0 13 9.5 22.5t22.5 9.5h192q13 0 22.5 -9.5t9.5 -22.5zM1792 608v-192q0 -13 -9.5 -22.5t-22.5 -9.5h-1344q-13 0 -22.5 9.5t-9.5 22.5v192q0 13 9.5 22.5 t22.5 9.5h1344q13 0 22.5 -9.5t9.5 -22.5zM1792 992v-192q0 -13 -9.5 -22.5t-22.5 -9.5h-1344q-13 0 -22.5 9.5t-9.5 22.5v192q0 13 9.5 22.5t22.5 9.5h1344q13 0 22.5 -9.5t9.5 -22.5zM1792 1376v-192q0 -13 -9.5 -22.5t-22.5 -9.5h-1344q-13 0 -22.5 9.5t-9.5 22.5v192 q0 13 9.5 22.5t22.5 9.5h1344q13 0 22.5 -9.5t9.5 -22.5z"/></svg></span><span class="mt">下注列表</span></li><li><span class="mi"><svg class="i" viewBox="0 -1536 1920 1792" style="width:13.93px;height:13px;"><path transform="scale(1,-1)" d="M768 384h384v96h-128v448h-114l-148 -137l77 -80q42 37 55 57h2v-288h-128v-96zM1280 640q0 -70 -21 -142t-59.5 -134t-101.5 -101t-138 -39t-138 39t-101.5 101t-59.5 134t-21 142t21 142t59.5 134t101.5 101t138 39t138 -39t101.5 -101t59.5 -134t21 -142zM1792 384 v512q-106 0 -181 75t-75 181h-1152q0 -106 -75 -181t-181 -75v-512q106 0 181 -75t75 -181h1152q0 106 75 181t181 75zM1920 1216v-1152q0 -26 -19 -45t-45 -19h-1792q-26 0 -45 19t-19 45v1152q0 26 19 45t45 19h1792q26 0 45 -19t19 -45z"/></svg></span><span class="mt">充值和提现</span></li><li><span class="mi"><svg class="i" viewBox="0 -1536 1664 1792" style="width:12.07px;height:13px;"><path transform="scale(1,-1)" d="M1639 1058q40 -57 18 -129l-275 -906q-19 -64 -76.5 -107.5t-122.5 -43.5h-923q-77 0 -148.5 53.5t-99.5 131.5q-24 67 -2 127q0 4 3 27t4 37q1 8 -3 21.5t-3 19.5q2 11 8 21t16.5 23.5t16.5 23.5q23 38 45 91.5t30 91.5q3 10 0.5 30t-0.5 28q3 11 17 28t17 23 q21 36 42 92t25 90q1 9 -2.5 32t0.5 28q4 13 22 30.5t22 22.5q19 26 42.5 84.5t27.5 96.5q1 8 -3 25.5t-2 26.5q2 8 9 18t18 23t17 21q8 12 16.5 30.5t15 35t16 36t19.5 32t26.5 23.5t36 11.5t47.5 -5.5l-1 -3q38 9 51 9h761q74 0 114 -56t18 -130l-274 -906 q-36 -119 -71.5 -153.5t-128.5 -34.5h-869q-27 0 -38 -15q-11 -16 -1 -43q24 -70 144 -70h923q29 0 56 15.5t35 41.5l300 987q7 22 5 57q38 -15 59 -43zM575 1056q-4 -13 2 -22.5t20 -9.5h608q13 0 25.5 9.5t16.5 22.5l21 64q4 13 -2 22.5t-20 9.5h-608q-13 0 -25.5 -9.5 t-16.5 -22.5zM492 800q-4 -13 2 -22.5t20 -9.5h608q13 0 25.5 9.5t16.5 22.5l21 64q4 13 -2 22.5t-20 9.5h-608q-13 0 -25.5 -9.5t-16.5 -22.5z"/></svg></span><span class="mt">任务列表</span></li><li><span class="mi"><svg class="i" viewBox="0 -1536 1792 1792" style="width:13.00px;height:13px;"><path transform="scale(1,-1)" d="M1664 896q53 0 90.5 -37.5t37.5 -90.5t-37.5 -90.5t-90.5 -37.5v-384q0 -52 -38 -90t-90 -38q-417 347 -812 380q-58 -19 -91 -66t-31 -100.5t40 -92.5q-20 -33 -23 -65.5t6 -58t33.5 -55t48 -50t61.5 -50.5q-29 -58 -111.5 -83t-168.5 -11.5t-132 55.5q-7 23 -29.5 87.5 t-32 94.5t-23 89t-15 101t3.5 98.5t22 110.5h-122q-66 0 -113 47t-47 113v192q0 66 47 113t113 47h480q435 0 896 384q52 0 90 -38t38 -90v-384zM1536 292v954q-394 -302 -768 -343v-270q377 -42 768 -341z"/></svg></span><span class="mt">通知</span></li></ul></div><div id="ct"><div class="bc"><svg class="i" viewBox="0 -1536 1792 1792" style="width:12.00px;height:12px;"><path transform="scale(1,-1)" d="M384 384q0 53 -37.5 90.5t-90.5 37.5t-90.5 -37.5t-37.5 -90.5t37.5 -90.5t90.5 -37.5t90.5 37.5t37.5 90.5zM576 832q0 53 -37.5 90.5t-90.5 37.5t-90.5 -37.5t-37.5 -90.5t37.5 -90.5t90.5 -37.5t90.5 37.5t37.5 90.5zM1004 351l101 382q6 26 -7.5 48.5t-38.5 29.5 t-48 -6.5t-30 -39.5l-101 -382q-60 -5 -107 -43.5t-63 -98.5q-20 -77 20 -146t117 -89t146 20t89 117q16 60 -6 117t-72 91zM1664 384q0 53 -37.5 90.5t-90.5 37.5t-90.5 -37.5t-37.5 -90.5t37.5 -90.5t90.5 -37.5t90.5 37.5t37.5 90.5zM1024 1024q0 53 -37.5 90.5 t-90.5 37.5t-90.5 -37.5t-37.5 -90.5t37.5 -90.5t90.5 -37.5t90.5 37.5t37.5 90.5zM1472 832q0 53 -37.5 90.5t-90.5 37.5t-90.5 -37.5t-37.5 -90.5t37.5 -90.5t90.5 -37.5t90.5 37.5t37.5 90.5zM1792 384q0 -261 -141 -483q-19 -29 -54 -29h-1402q-35 0 -54 29 q-141 221 -141 483q0 182 71 348t191 286t286 191t348 71t348 -71t286 -191t191 -286t71 -348z"/></svg> Dashboard</div><div class="bcr">下注列表</div><div id="pn"><div class="ph"><div class="tab on" style="left:16px;width:42px">All</div><div class="tab" style="left:64px;width:74.5px">Status 0</div><div class="tab" style="left:144.25px;width:74.75px">Status 1</div><div class="tab" style="left:225px;width:74.5px">Status 2</div></div><div class="btn b1"><svg class="i" viewBox="0 -1536 1536 1792" style="width:10.29px;height:12px;"><path transform="scale(1,-1)" d="M1511 480q0 -5 -1 -7q-64 -268 -268 -434.5t-478 -166.5q-146 0 -282.5 55t-243.5 157l-129 -129q-19 -19 -45 -19t-45 19t-19 45v448q0 26 19 45t45 19h448q26 0 45 -19t19 -45t-19 -45l-137 -137q71 -66 161 -102t187 -36q134 0 250 65t186 179q11 17 53 117 q8 23 30 23h192q13 0 22.5 -9.5t9.5 -22.5zM1536 1280v-448q0 -26 -19 -45t-45 -19h-448q-26 0 -45 19t-19 45t19 45l138 138q-148 137 -349 137q-134 0 -250 -65t-186 -179q-11 -17 -53 -117q-8 -23 -30 -23h-199q-13 0 -22.5 9.5t-9.5 22.5v7q65 268 270 434.5t480 166.5 q146 0 284 -55.5t245 -156.5l130 129q19 19 45 19t45 -19t19 -45z"/></svg></div><div class="btn b2"><svg class="i" viewBox="0 -1536 1408 1792" style="width:9.43px;height:12px;"><path transform="scale(1,-1)" d="M1408 800v-192q0 -40 -28 -68t-68 -28h-416v-416q0 -40 -28 -68t-68 -28h-192q-40 0 -68 28t-28 68v416h-416q-40 0 -68 28t-28 68v192q0 40 28 68t68 28h416v416q0 40 28 68t68 28h192q40 0 68 -28t28 -68v-416h416q40 0 68 -28t28 -68z"/></svg><span>Add</span></div><div class="btn b3"><svg class="i" viewBox="0 -1536 1408 1792" style="width:9.43px;height:12px;"><path transform="scale(1,-1)" d="M512 160v704q0 14 -9 23t-23 9h-64q-14 0 -23 -9t-9 -23v-704q0 -14 9 -23t23 -9h64q14 0 23 9t9 23zM768 160v704q0 14 -9 23t-23 9h-64q-14 0 -23 -9t-9 -23v-704q0 -14 9 -23t23 -9h64q14 0 23 9t9 23zM1024 160v704q0 14 -9 23t-23 9h-64q-14 0 -23 -9t-9 -23v-704 q0 -14 9 -23t23 -9h64q14 0 23 9t9 23zM480 1152h448l-48 117q-7 9 -17 11h-317q-10 -2 -17 -11zM1408 1120v-64q0 -14 -9 -23t-23 -9h-96v-948q0 -83 -47 -143.5t-113 -60.5h-832q-66 0 -113 58.5t-47 141.5v952h-96q-14 0 -23 9t-9 23v64q0 14 9 23t23 9h309l70 167 q15 37 54 63t79 26h320q40 0 79 -26t54 -63l70 -167h309q14 0 23 -9t9 -23z"/></svg><span>Delete</span></div><div class="btn b4">总下注：1187755.000 总输赢：-910080.500 | 红色总下注：251449.5 绿色总下注：416986</div><div class="sin">搜索</div><div class="bg"><div class="g1"><svg class="i" viewBox="0 0 12 12" style="width:11.5px;height:11.5px"><path fill-rule="evenodd" d="M0 0h12v12H0zM1 2.6v8.4h10V2.6zM2 4h1.6v1.3H2zM4.6 4H10v1.3H4.6zM2 6.2h1.6v1.3H2zM4.6 6.2H10v1.3H4.6zM2 8.4h1.6v1.3H2zM4.6 8.4H10v1.3H4.6z"/></svg></div><div class="g2"><svg class="i" viewBox="0 0 11 10.4" style="width:11px;height:10.4px"><path d="M0 0h3v2.8H0zM4 0h3v2.8H4zM8 0h3v2.8H8zM0 3.8h3v2.8H0zM4 3.8h3v2.8H4zM8 3.8h3v2.8H8zM0 7.6h3v2.8H0zM4 7.6h3v2.8H4zM8 7.6h3v2.8H8z"/></svg><svg class="i" viewBox="0 -1536 1024 1792" style="width:6.86px;height:12px;margin-left:4.5px"><path transform="scale(1,-1)" d="M1024 832q0 -26 -19 -45l-448 -448q-19 -19 -45 -19t-45 19l-448 448q-19 19 -19 45t19 45t45 19h896q26 0 45 -19t19 -45z"/></svg></div><div class="g3"><svg class="i" viewBox="0 0 11 11.5" style="width:11px;height:11.5px"><path d="M0 8.4h11v3.1H0zM4.2 0h5.6v5.6L7.9 3.7 4.6 7 2.8 7 2.8 5.2 6.1 1.9z"/></svg><svg class="i" viewBox="0 -1536 1024 1792" style="width:6.86px;height:12px;margin-left:3.7px"><path transform="scale(1,-1)" d="M1024 832q0 -26 -19 -45l-448 -448q-19 -19 -45 -19t-45 19l-448 448q-19 19 -19 45t19 45t45 19h896q26 0 45 -19t19 -45z"/></svg></div></div><div class="btn b5"><svg class="i" viewBox="0 -1536 1664 1792" style="width:11.42px;height:12.3px;"><path transform="scale(1,-1)" d="M1152 704q0 185 -131.5 316.5t-316.5 131.5t-316.5 -131.5t-131.5 -316.5t131.5 -316.5t316.5 -131.5t316.5 131.5t131.5 316.5zM1664 -128q0 -52 -38 -90t-90 -38q-54 0 -90 38l-343 342q-179 -124 -399 -124q-143 0 -273.5 55.5t-225 150t-150 225t-55.5 273.5 t55.5 273.5t150 225t225 150t273.5 55.5t273.5 -55.5t225 -150t150 -225t55.5 -273.5q0 -220 -124 -399l343 -343q37 -37 37 -90z"/></svg></div><table id="tb"><colgroup><col style="width:34.30px"><col style="width:41.60px"><col style="width:77.60px"><col style="width:105.00px"><col style="width:117.00px"><col style="width:69.00px"><col style="width:72.90px"><col style="width:74.20px"><col style="width:85.70px"><col style="width:148.30px"><col style="width:148.80px"><col style="width:126.00px"><col style="width:69.50px"></colgroup><thead><tr><th><input type="checkbox"></th><th>Id</th><th>Users_id</th><th>Qishu</th><th>Bet_code</th><th>Money</th><th>Hasil</th><th>开奖结果</th><th>Status</th><th>Createtime</th><th>Clearingtime</th><th>Users.nickname</th><th>Operate</th></tr></thead><tbody><tr><td><input type="checkbox"></td><td>343</td><td>33</td><td>20220122215</td><td><span class="c-violet">Bet_code violet</span></td><td>100.000</td><td>-100.000</td><td>2</td><td><span class="st"><i></i>Status 1</span></td><td>2022-01-22 13:13:19</td><td>2022-01-22 13:15:01</td><td>18888888888</td><td class="op"><span class="ob e"><svg class="i" viewBox="0 -1536 1536 1792" style="width:10.29px;height:12px;"><path transform="scale(1,-1)" d="M363 0l91 91l-235 235l-91 -91v-107h128v-128h107zM886 928q0 22 -22 22q-10 0 -17 -7l-542 -542q-7 -7 -7 -17q0 -22 22 -22q10 0 17 7l542 542q7 7 7 17zM832 1120l416 -416l-832 -832h-416v416zM1515 1024q0 -53 -37 -90l-166 -166l-416 416l166 165q36 38 90 38 q53 0 91 -38l235 -234q37 -39 37 -91z"/></svg></span><span class="ob d"><svg class="i" viewBox="0 -1536 1408 1792" style="width:9.43px;height:12px;"><path transform="scale(1,-1)" d="M512 160v704q0 14 -9 23t-23 9h-64q-14 0 -23 -9t-9 -23v-704q0 -14 9 -23t23 -9h64q14 0 23 9t9 23zM768 160v704q0 14 -9 23t-23 9h-64q-14 0 -23 -9t-9 -23v-704q0 -14 9 -23t23 -9h64q14 0 23 9t9 23zM1024 160v704q0 14 -9 23t-23 9h-64q-14 0 -23 -9t-9 -23v-704 q0 -14 9 -23t23 -9h64q14 0 23 9t9 23zM480 1152h448l-48 117q-7 9 -17 11h-317q-10 -2 -17 -11zM1408 1120v-64q0 -14 -9 -23t-23 -9h-96v-948q0 -83 -47 -143.5t-113 -60.5h-832q-66 0 -113 58.5t-47 141.5v952h-96q-14 0 -23 9t-9 23v64q0 14 9 23t23 9h309l70 167 q15 37 54 63t79 26h320q40 0 79 -26t54 -63l70 -167h309q14 0 23 -9t9 -23z"/></svg></span></td></tr><tr><td><input type="checkbox"></td><td>342</td><td>33</td><td>20220122214</td><td><span class="c-red">Bet_code red</span></td><td>170.000</td><td>170.000</td><td>6</td><td><span class="st"><i></i>Status 1</span></td><td>2022-01-22 13:09:34</td><td>2022-01-22 13:12:01</td><td>18888888888</td><td class="op"><span class="ob e"><svg class="i" viewBox="0 -1536 1536 1792" style="width:10.29px;height:12px;"><path transform="scale(1,-1)" d="M363 0l91 91l-235 235l-91 -91v-107h128v-128h107zM886 928q0 22 -22 22q-10 0 -17 -7l-542 -542q-7 -7 -7 -17q0 -22 22 -22q10 0 17 7l542 542q7 7 7 17zM832 1120l416 -416l-832 -832h-416v416zM1515 1024q0 -53 -37 -90l-166 -166l-416 416l166 165q36 38 90 38 q53 0 91 -38l235 -234q37 -39 37 -91z"/></svg></span><span class="ob d"><svg class="i" viewBox="0 -1536 1408 1792" style="width:9.43px;height:12px;"><path transform="scale(1,-1)" d="M512 160v704q0 14 -9 23t-23 9h-64q-14 0 -23 -9t-9 -23v-704q0 -14 9 -23t23 -9h64q14 0 23 9t9 23zM768 160v704q0 14 -9 23t-23 9h-64q-14 0 -23 -9t-9 -23v-704q0 -14 9 -23t23 -9h64q14 0 23 9t9 23zM1024 160v704q0 14 -9 23t-23 9h-64q-14 0 -23 -9t-9 -23v-704 q0 -14 9 -23t23 -9h64q14 0 23 9t9 23zM480 1152h448l-48 117q-7 9 -17 11h-317q-10 -2 -17 -11zM1408 1120v-64q0 -14 -9 -23t-23 -9h-96v-948q0 -83 -47 -143.5t-113 -60.5h-832q-66 0 -113 58.5t-47 141.5v952h-96q-14 0 -23 9t-9 23v64q0 14 9 23t23 9h309l70 167 q15 37 54 63t79 26h320q40 0 79 -26t54 -63l70 -167h309q14 0 23 -9t9 -23z"/></svg></span></td></tr><tr><td><input type="checkbox"></td><td>341</td><td>33</td><td>20220122214</td><td><span class="c-green">Bet_code green</span></td><td>160.000</td><td>-160.000</td><td>6</td><td><span class="st"><i></i>Status 1</span></td><td>2022-01-22 13:09:25</td><td>2022-01-22 13:12:01</td><td>18888888888</td><td class="op"><span class="ob e"><svg class="i" viewBox="0 -1536 1536 1792" style="width:10.29px;height:12px;"><path transform="scale(1,-1)" d="M363 0l91 91l-235 235l-91 -91v-107h128v-128h107zM886 928q0 22 -22 22q-10 0 -17 -7l-542 -542q-7 -7 -7 -17q0 -22 22 -22q10 0 17 7l542 542q7 7 7 17zM832 1120l416 -416l-832 -832h-416v416zM1515 1024q0 -53 -37 -90l-166 -166l-416 416l166 165q36 38 90 38 q53 0 91 -38l235 -234q37 -39 37 -91z"/></svg></span><span class="ob d"><svg class="i" viewBox="0 -1536 1408 1792" style="width:9.43px;height:12px;"><path transform="scale(1,-1)" d="M512 160v704q0 14 -9 23t-23 9h-64q-14 0 -23 -9t-9 -23v-704q0 -14 9 -23t23 -9h64q14 0 23 9t9 23zM768 160v704q0 14 -9 23t-23 9h-64q-14 0 -23 -9t-9 -23v-704q0 -14 9 -23t23 -9h64q14 0 23 9t9 23zM1024 160v704q0 14 -9 23t-23 9h-64q-14 0 -23 -9t-9 -23v-704 q0 -14 9 -23t23 -9h64q14 0 23 9t9 23zM480 1152h448l-48 117q-7 9 -17 11h-317q-10 -2 -17 -11zM1408 1120v-64q0 -14 -9 -23t-23 -9h-96v-948q0 -83 -47 -143.5t-113 -60.5h-832q-66 0 -113 58.5t-47 141.5v952h-96q-14 0 -23 9t-9 23v64q0 14 9 23t23 9h309l70 167 q15 37 54 63t79 26h320q40 0 79 -26t54 -63l70 -167h309q14 0 23 -9t9 -23z"/></svg></span></td></tr><tr><td><input type="checkbox"></td><td>340</td><td>33</td><td>20220122214</td><td><span class="c-violet">Bet_code violet</span></td><td>150.000</td><td>-150.000</td><td>6</td><td><span class="st"><i></i>Status 1</span></td><td>2022-01-22 13:09:11</td><td>2022-01-22 13:12:01</td><td>18888888888</td><td class="op"><span class="ob e"><svg class="i" viewBox="0 -1536 1536 1792" style="width:10.29px;height:12px;"><path transform="scale(1,-1)" d="M363 0l91 91l-235 235l-91 -91v-107h128v-128h107zM886 928q0 22 -22 22q-10 0 -17 -7l-542 -542q-7 -7 -7 -17q0 -22 22 -22q10 0 17 7l542 542q7 7 7 17zM832 1120l416 -416l-832 -832h-416v416zM1515 1024q0 -53 -37 -90l-166 -166l-416 416l166 165q36 38 90 38 q53 0 91 -38l235 -234q37 -39 37 -91z"/></svg></span><span class="ob d"><svg class="i" viewBox="0 -1536 1408 1792" style="width:9.43px;height:12px;"><path transform="scale(1,-1)" d="M512 160v704q0 14 -9 23t-23 9h-64q-14 0 -23 -9t-9 -23v-704q0 -14 9 -23t23 -9h64q14 0 23 9t9 23zM768 160v704q0 14 -9 23t-23 9h-64q-14 0 -23 -9t-9 -23v-704q0 -14 9 -23t23 -9h64q14 0 23 9t9 23zM1024 160v704q0 14 -9 23t-23 9h-64q-14 0 -23 -9t-9 -23v-704 q0 -14 9 -23t23 -9h64q14 0 23 9t9 23zM480 1152h448l-48 117q-7 9 -17 11h-317q-10 -2 -17 -11zM1408 1120v-64q0 -14 -9 -23t-23 -9h-96v-948q0 -83 -47 -143.5t-113 -60.5h-832q-66 0 -113 58.5t-47 141.5v952h-96q-14 0 -23 9t-9 23v64q0 14 9 23t23 9h309l70 167 q15 37 54 63t79 26h320q40 0 79 -26t54 -63l70 -167h309q14 0 23 -9t9 -23z"/></svg></span></td></tr><tr><td><input type="checkbox"></td><td>339</td><td>33</td><td>20220122208</td><td><span class="c-green">Bet_code green</span></td><td>10.000</td><td>10.000</td><td>3</td><td><span class="st"><i></i>Status 1</span></td><td>2022-01-22 12:52:12</td><td>2022-01-22 12:54:01</td><td>18888888888</td><td class="op"><span class="ob e"><svg class="i" viewBox="0 -1536 1536 1792" style="width:10.29px;height:12px;"><path transform="scale(1,-1)" d="M363 0l91 91l-235 235l-91 -91v-107h128v-128h107zM886 928q0 22 -22 22q-10 0 -17 -7l-542 -542q-7 -7 -7 -17q0 -22 22 -22q10 0 17 7l542 542q7 7 7 17zM832 1120l416 -416l-832 -832h-416v416zM1515 1024q0 -53 -37 -90l-166 -166l-416 416l166 165q36 38 90 38 q53 0 91 -38l235 -234q37 -39 37 -91z"/></svg></span><span class="ob d"><svg class="i" viewBox="0 -1536 1408 1792" style="width:9.43px;height:12px;"><path transform="scale(1,-1)" d="M512 160v704q0 14 -9 23t-23 9h-64q-14 0 -23 -9t-9 -23v-704q0 -14 9 -23t23 -9h64q14 0 23 9t9 23zM768 160v704q0 14 -9 23t-23 9h-64q-14 0 -23 -9t-9 -23v-704q0 -14 9 -23t23 -9h64q14 0 23 9t9 23zM1024 160v704q0 14 -9 23t-23 9h-64q-14 0 -23 -9t-9 -23v-704 q0 -14 9 -23t23 -9h64q14 0 23 9t9 23zM480 1152h448l-48 117q-7 9 -17 11h-317q-10 -2 -17 -11zM1408 1120v-64q0 -14 -9 -23t-23 -9h-96v-948q0 -83 -47 -143.5t-113 -60.5h-832q-66 0 -113 58.5t-47 141.5v952h-96q-14 0 -23 9t-9 23v64q0 14 9 23t23 9h309l70 167 q15 37 54 63t79 26h320q40 0 79 -26t54 -63l70 -167h309q14 0 23 -9t9 -23z"/></svg></span></td></tr><tr><td><input type="checkbox"></td><td>338</td><td>33</td><td>20220122208</td><td><span class="c-red">Bet_code red</span></td><td>10.000</td><td>-10.000</td><td>3</td><td><span class="st"><i></i>Status 1</span></td><td>2022-01-22 12:52:10</td><td>2022-01-22 12:54:01</td><td>18888888888</td><td class="op"><span class="ob e"><svg class="i" viewBox="0 -1536 1536 1792" style="width:10.29px;height:12px;"><path transform="scale(1,-1)" d="M363 0l91 91l-235 235l-91 -91v-107h128v-128h107zM886 928q0 22 -22 22q-10 0 -17 -7l-542 -542q-7 -7 -7 -17q0 -22 22 -22q10 0 17 7l542 542q7 7 7 17zM832 1120l416 -416l-832 -832h-416v416zM1515 1024q0 -53 -37 -90l-166 -166l-416 416l166 165q36 38 90 38 q53 0 91 -38l235 -234q37 -39 37 -91z"/></svg></span><span class="ob d"><svg class="i" viewBox="0 -1536 1408 1792" style="width:9.43px;height:12px;"><path transform="scale(1,-1)" d="M512 160v704q0 14 -9 23t-23 9h-64q-14 0 -23 -9t-9 -23v-704q0 -14 9 -23t23 -9h64q14 0 23 9t9 23zM768 160v704q0 14 -9 23t-23 9h-64q-14 0 -23 -9t-9 -23v-704q0 -14 9 -23t23 -9h64q14 0 23 9t9 23zM1024 160v704q0 14 -9 23t-23 9h-64q-14 0 -23 -9t-9 -23v-704 q0 -14 9 -23t23 -9h64q14 0 23 9t9 23zM480 1152h448l-48 117q-7 9 -17 11h-317q-10 -2 -17 -11zM1408 1120v-64q0 -14 -9 -23t-23 -9h-96v-948q0 -83 -47 -143.5t-113 -60.5h-832q-66 0 -113 58.5t-47 141.5v952h-96q-14 0 -23 9t-9 23v64q0 14 9 23t23 9h309l70 167 q15 37 54 63t79 26h320q40 0 79 -26t54 -63l70 -167h309q14 0 23 -9t9 -23z"/></svg></span></td></tr><tr><td><input type="checkbox"></td><td>337</td><td>33</td><td>20220122208</td><td><span class="c-violet">Bet_code violet</span></td><td>10.000</td><td>-10.000</td><td>3</td><td><span class="st"><i></i>Status 1</span></td><td>2022-01-22 12:52:03</td><td>2022-01-22 12:54:01</td><td>18888888888</td><td class="op"><span class="ob e"><svg class="i" viewBox="0 -1536 1536 1792" style="width:10.29px;height:12px;"><path transform="scale(1,-1)" d="M363 0l91 91l-235 235l-91 -91v-107h128v-128h107zM886 928q0 22 -22 22q-10 0 -17 -7l-542 -542q-7 -7 -7 -17q0 -22 22 -22q10 0 17 7l542 542q7 7 7 17zM832 1120l416 -416l-832 -832h-416v416zM1515 1024q0 -53 -37 -90l-166 -166l-416 416l166 165q36 38 90 38 q53 0 91 -38l235 -234q37 -39 37 -91z"/></svg></span><span class="ob d"><svg class="i" viewBox="0 -1536 1408 1792" style="width:9.43px;height:12px;"><path transform="scale(1,-1)" d="M512 160v704q0 14 -9 23t-23 9h-64q-14 0 -23 -9t-9 -23v-704q0 -14 9 -23t23 -9h64q14 0 23 9t9 23zM768 160v704q0 14 -9 23t-23 9h-64q-14 0 -23 -9t-9 -23v-704q0 -14 9 -23t23 -9h64q14 0 23 9t9 23zM1024 160v704q0 14 -9 23t-23 9h-64q-14 0 -23 -9t-9 -23v-704 q0 -14 9 -23t23 -9h64q14 0 23 9t9 23zM480 1152h448l-48 117q-7 9 -17 11h-317q-10 -2 -17 -11zM1408 1120v-64q0 -14 -9 -23t-23 -9h-96v-948q0 -83 -47 -143.5t-113 -60.5h-832q-66 0 -113 58.5t-47 141.5v952h-96q-14 0 -23 9t-9 23v64q0 14 9 23t23 9h309l70 167 q15 37 54 63t79 26h320q40 0 79 -26t54 -63l70 -167h309q14 0 23 -9t9 -23z"/></svg></span></td></tr><tr><td><input type="checkbox"></td><td>336</td><td>33</td><td>20220122205</td><td><span class="c-violet">Bet_code violet</span></td><td>200.000</td><td>-200.000</td><td>4</td><td><span class="st"><i></i>Status 1</span></td><td>2022-01-22 12:43:55</td><td>2022-01-22 12:45:01</td><td>18888888888</td><td class="op"><span class="ob e"><svg class="i" viewBox="0 -1536 1536 1792" style="width:10.29px;height:12px;"><path transform="scale(1,-1)" d="M363 0l91 91l-235 235l-91 -91v-107h128v-128h107zM886 928q0 22 -22 22q-10 0 -17 -7l-542 -542q-7 -7 -7 -17q0 -22 22 -22q10 0 17 7l542 542q7 7 7 17zM832 1120l416 -416l-832 -832h-416v416zM1515 1024q0 -53 -37 -90l-166 -166l-416 416l166 165q36 38 90 38 q53 0 91 -38l235 -234q37 -39 37 -91z"/></svg></span><span class="ob d"><svg class="i" viewBox="0 -1536 1408 1792" style="width:9.43px;height:12px;"><path transform="scale(1,-1)" d="M512 160v704q0 14 -9 23t-23 9h-64q-14 0 -23 -9t-9 -23v-704q0 -14 9 -23t23 -9h64q14 0 23 9t9 23zM768 160v704q0 14 -9 23t-23 9h-64q-14 0 -23 -9t-9 -23v-704q0 -14 9 -23t23 -9h64q14 0 23 9t9 23zM1024 160v704q0 14 -9 23t-23 9h-64q-14 0 -23 -9t-9 -23v-704 q0 -14 9 -23t23 -9h64q14 0 23 9t9 23zM480 1152h448l-48 117q-7 9 -17 11h-317q-10 -2 -17 -11zM1408 1120v-64q0 -14 -9 -23t-23 -9h-96v-948q0 -83 -47 -143.5t-113 -60.5h-832q-66 0 -113 58.5t-47 141.5v952h-96q-14 0 -23 9t-9 23v64q0 14 9 23t23 9h309l70 167 q15 37 54 63t79 26h320q40 0 79 -26t54 -63l70 -167h309q14 0 23 -9t9 -23z"/></svg></span></td></tr><tr><td><input type="checkbox"></td><td>335</td><td>33</td><td>20220122205</td><td><span class="c-violet">Bet_code violet</span></td><td>100.000</td><td>-100.000</td><td>4</td><td><span class="st"><i></i>Status 1</span></td><td>2022-01-22 12:42:36</td><td>2022-01-22 12:45:01</td><td>18888888888</td><td class="op"><span class="ob e"><svg class="i" viewBox="0 -1536 1536 1792" style="width:10.29px;height:12px;"><path transform="scale(1,-1)" d="M363 0l91 91l-235 235l-91 -91v-107h128v-128h107zM886 928q0 22 -22 22q-10 0 -17 -7l-542 -542q-7 -7 -7 -17q0 -22 22 -22q10 0 17 7l542 542q7 7 7 17zM832 1120l416 -416l-832 -832h-416v416zM1515 1024q0 -53 -37 -90l-166 -166l-416 416l166 165q36 38 90 38 q53 0 91 -38l235 -234q37 -39 37 -91z"/></svg></span><span class="ob d"><svg class="i" viewBox="0 -1536 1408 1792" style="width:9.43px;height:12px;"><path transform="scale(1,-1)" d="M512 160v704q0 14 -9 23t-23 9h-64q-14 0 -23 -9t-9 -23v-704q0 -14 9 -23t23 -9h64q14 0 23 9t9 23zM768 160v704q0 14 -9 23t-23 9h-64q-14 0 -23 -9t-9 -23v-704q0 -14 9 -23t23 -9h64q14 0 23 9t9 23zM1024 160v704q0 14 -9 23t-23 9h-64q-14 0 -23 -9t-9 -23v-704 q0 -14 9 -23t23 -9h64q14 0 23 9t9 23zM480 1152h448l-48 117q-7 9 -17 11h-317q-10 -2 -17 -11zM1408 1120v-64q0 -14 -9 -23t-23 -9h-96v-948q0 -83 -47 -143.5t-113 -60.5h-832q-66 0 -113 58.5t-47 141.5v952h-96q-14 0 -23 9t-9 23v64q0 14 9 23t23 9h309l70 167 q15 37 54 63t79 26h320q40 0 79 -26t54 -63l70 -167h309q14 0 23 -9t9 -23z"/></svg></span></td></tr><tr><td><input type="checkbox"></td><td>334</td><td>2</td><td>20210724206</td><td><span class="c-green">Bet_code green</span></td><td>30.000</td><td>-30.000</td><td>8</td><td><span class="st"><i></i>Status 1</span></td><td>2021-07-24 12:45:52</td><td>2021-07-24 12:48:01</td><td>弟娃儿</td><td class="op"><span class="ob e"><svg class="i" viewBox="0 -1536 1536 1792" style="width:10.29px;height:12px;"><path transform="scale(1,-1)" d="M363 0l91 91l-235 235l-91 -91v-107h128v-128h107zM886 928q0 22 -22 22q-10 0 -17 -7l-542 -542q-7 -7 -7 -17q0 -22 22 -22q10 0 17 7l542 542q7 7 7 17zM832 1120l416 -416l-832 -832h-416v416zM1515 1024q0 -53 -37 -90l-166 -166l-416 416l166 165q36 38 90 38 q53 0 91 -38l235 -234q37 -39 37 -91z"/></svg></span><span class="ob d"><svg class="i" viewBox="0 -1536 1408 1792" style="width:9.43px;height:12px;"><path transform="scale(1,-1)" d="M512 160v704q0 14 -9 23t-23 9h-64q-14 0 -23 -9t-9 -23v-704q0 -14 9 -23t23 -9h64q14 0 23 9t9 23zM768 160v704q0 14 -9 23t-23 9h-64q-14 0 -23 -9t-9 -23v-704q0 -14 9 -23t23 -9h64q14 0 23 9t9 23zM1024 160v704q0 14 -9 23t-23 9h-64q-14 0 -23 -9t-9 -23v-704 q0 -14 9 -23t23 -9h64q14 0 23 9t9 23zM480 1152h448l-48 117q-7 9 -17 11h-317q-10 -2 -17 -11zM1408 1120v-64q0 -14 -9 -23t-23 -9h-96v-948q0 -83 -47 -143.5t-113 -60.5h-832q-66 0 -113 58.5t-47 141.5v952h-96q-14 0 -23 9t-9 23v64q0 14 9 23t23 9h309l70 167 q15 37 54 63t79 26h320q40 0 79 -26t54 -63l70 -167h309q14 0 23 -9t9 -23z"/></svg></span></td></tr></tbody></table><div class="pinfo">显示第 1 到第 10 条记录，总共 340 条记录 每页显示</div><div class="btn psz">10<svg class="i" viewBox="0 -1536 1024 1792" style="width:6.29px;height:11px;margin-left:3px"><path transform="scale(1,-1)" d="M1024 320q0 -26 -19 -45t-45 -19h-896q-26 0 -45 19t-19 45t19 45l448 448q19 19 45 19t45 -19l448 -448q19 -19 19 -45z"/></svg></div><div class="pinfo2">条记录</div><div class="pg"><div class="p" style="left:0.0px;width:73.8px">Previous</div><div class="p on" style="left:72.8px;width:31.9px">1</div><div class="p" style="left:103.7px;width:31.9px">2</div><div class="p" style="left:134.6px;width:31.8px">3</div><div class="p" style="left:165.4px;width:32.3px">4</div><div class="p" style="left:196.7px;width:31.9px">5</div><div class="p dis" style="left:227.6px;width:35.7px">...</div><div class="p" style="left:262.3px;width:38.3px">34</div><div class="p" style="left:299.6px;width:50.7px">Next</div></div><div class="jin"></div><div class="btn go">Go</div></div></div></body></html>
